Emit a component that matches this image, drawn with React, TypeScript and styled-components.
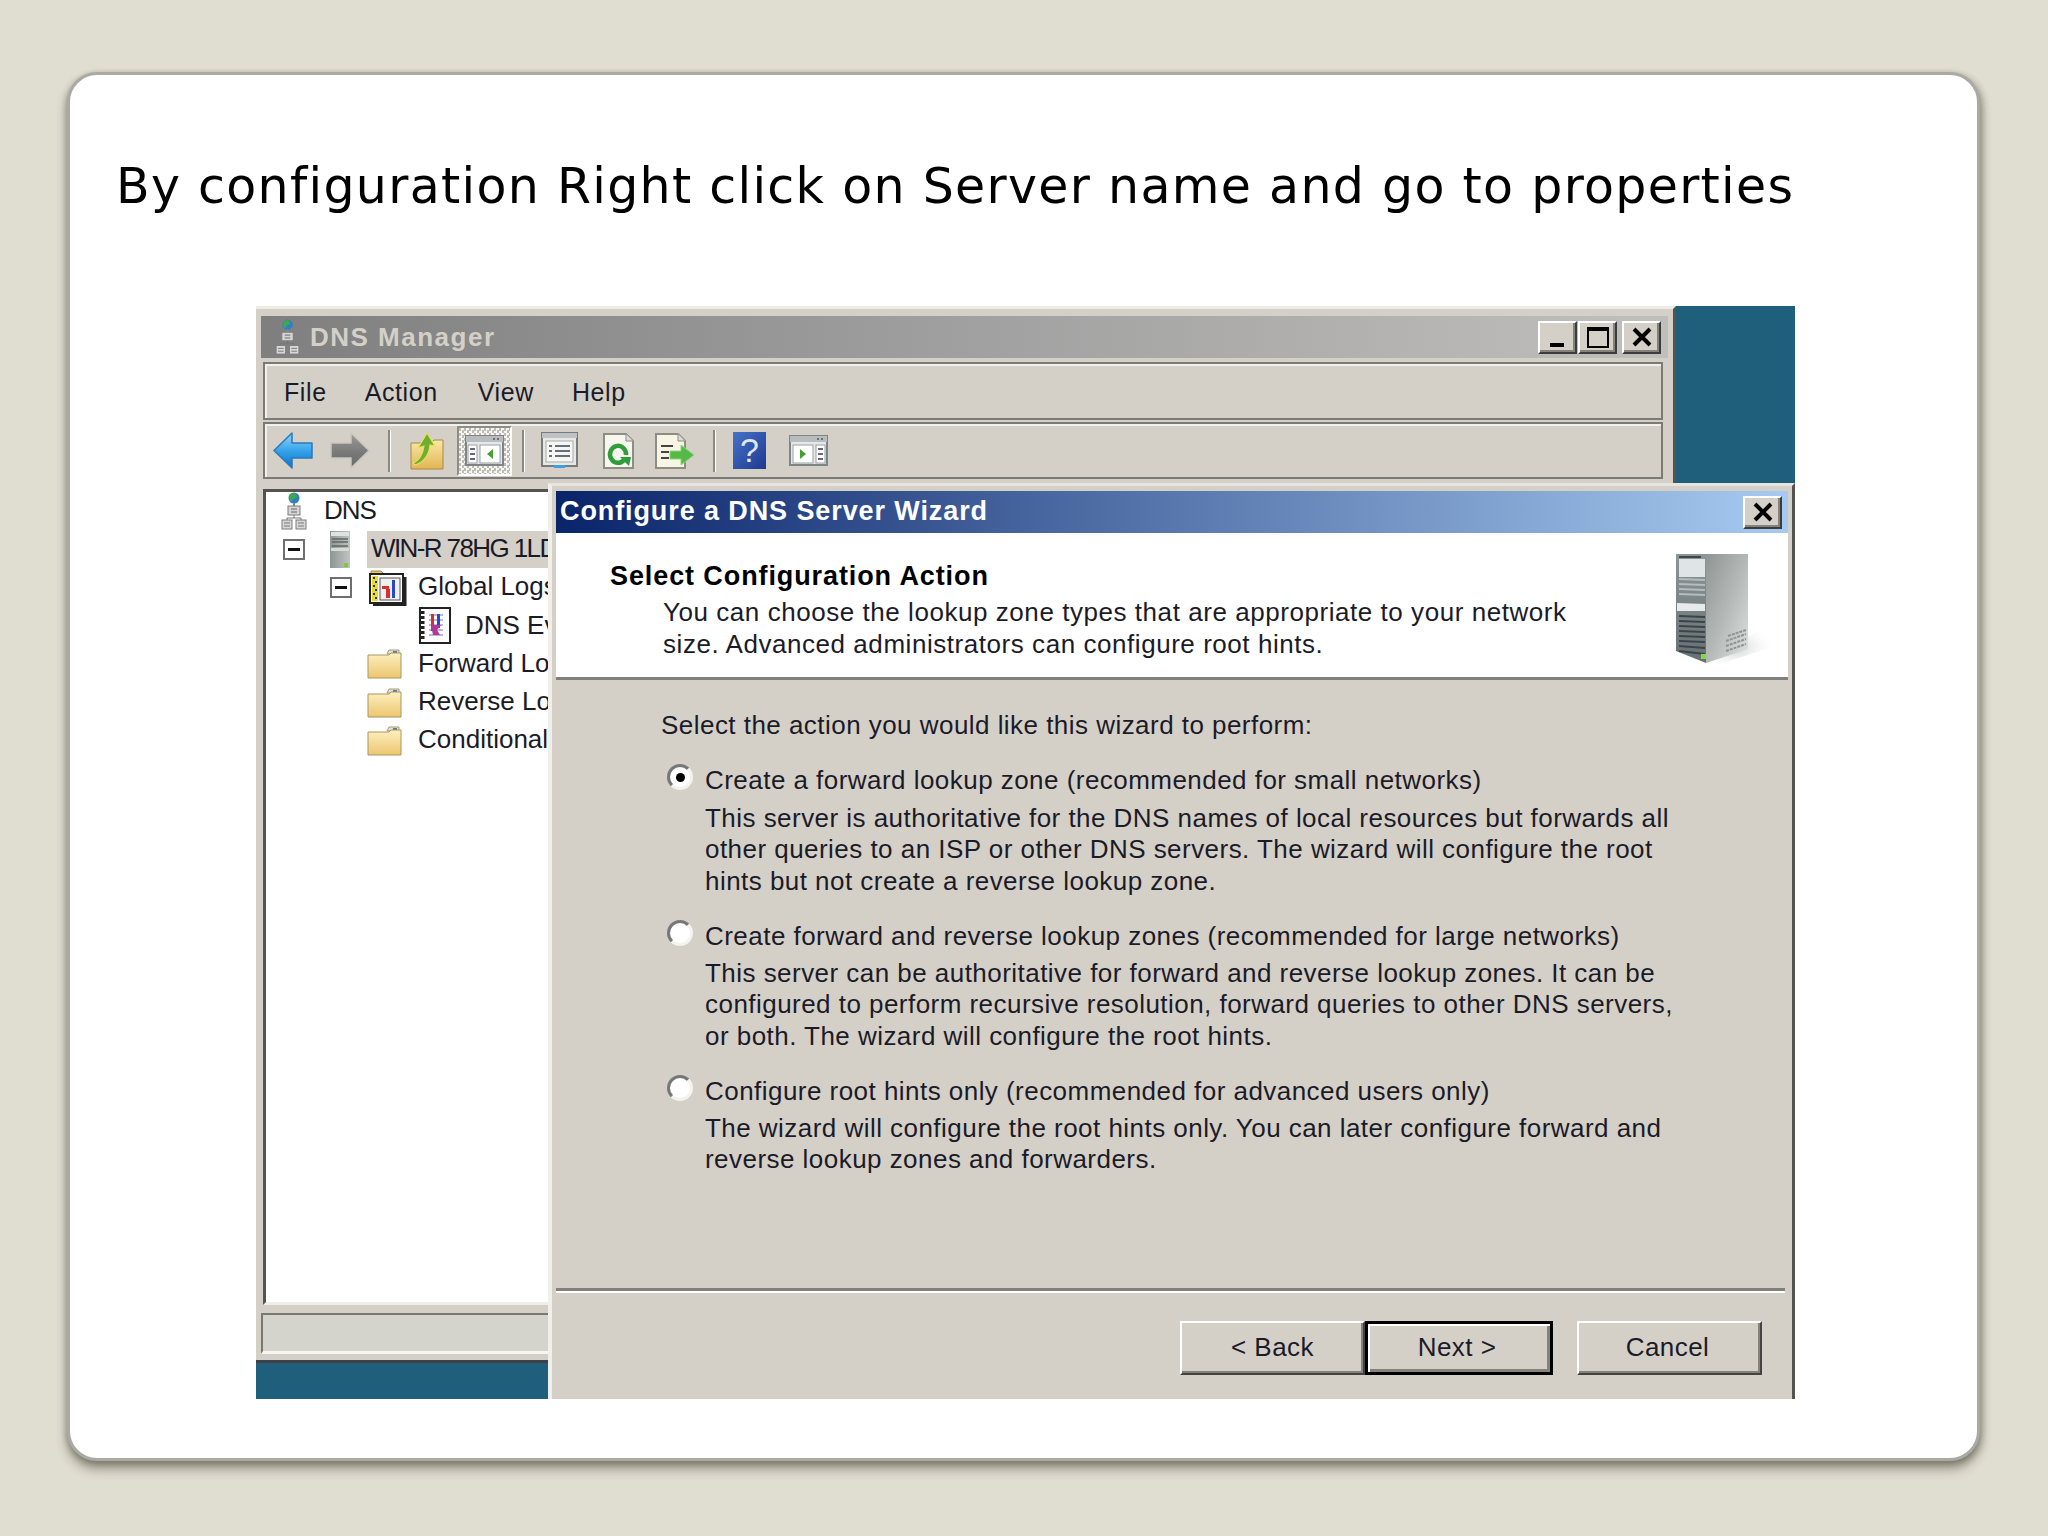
import React from 'react';
import styled, { createGlobalStyle } from 'styled-components';

const GlobalStyle = createGlobalStyle`
  html, body {
    margin: 0;
    padding: 0;
    background: #e0ddd1;
  }
`;

const Page = styled.div`
  box-sizing: border-box;
  width: 2048px;
  height: 1536px;
  padding: 72px 68px 75px 67px;
  background: #e0ddd1;
`;

const Card = styled.div`
  box-sizing: border-box;
  height: 100%;
  padding: 83px 46px 0;
  background: #fff;
  border: 3px solid #aaa9a2;
  border-radius: 30px;
  box-shadow: 0 8px 11px rgba(60, 58, 45, 0.45), -2px 2px 5px rgba(60, 58, 45, 0.15), 3px 2px 6px rgba(60, 58, 45, 0.25);
`;

const SlideTitle = styled.h1`
  margin: 0 0 90px;
  font: 400 49px/58px 'DejaVu Sans', sans-serif;
  letter-spacing: 1.3px;
  color: #000;
  white-space: nowrap;
`;

const Desktop = styled.div`
  position: relative;
  width: 1539px;
  height: 1093px;
  margin-left: 140px;
  background: #1f5f7b;
`;

const MainWindow = styled.div`
  position: absolute;
  left: 0;
  top: 0;
  box-sizing: border-box;
  width: 1420px;
  height: 1057px;
  padding: 7px 5px 0 5px;
  display: flex;
  flex-direction: column;
  background: #d4d0c8;
  border-top: 3px solid #eeece6;
  border-right: 3px solid #55534f;
  border-bottom: 3px solid #3e4248;
  font: 400 26px/31px 'Liberation Sans', sans-serif;
  color: #1b1b28;
`;

const TitleBar = styled.div`
  height: 42px;
  flex: none;
  display: flex;
  align-items: center;
  padding: 0 7px 0 14px;
  background: linear-gradient(90deg, #7f7f7f 0%, #a0a0a0 50%, #c1bfbd 100%);
`;

const WindowName = styled.span`
  margin-left: 10px;
  font-weight: 700;
  font-size: 26px;
  letter-spacing: 1.5px;
  color: #d4d0c8;
  flex: 1;
`;

const Caption = styled.button<{ $gap?: number }>`
  box-sizing: border-box;
  width: 39px;
  height: 33px;
  margin: 0 0 0 ${p => p.$gap ?? 0}px;
  padding: 0;
  display: flex;
  align-items: center;
  justify-content: center;
  background: #d4d0c8;
  border: 2px solid;
  border-color: #fff #3c3c3c #3c3c3c #fff;
  box-shadow: inset -2px -2px 0 #85827c;
`;

const Bar = styled.div<{ $height: number; $top?: number }>`
  box-sizing: border-box;
  flex: none;
  height: ${p => p.$height}px;
  margin: ${p => p.$top ?? 0}px 5px 2px 2px;
  display: flex;
  align-items: center;
  border: 2px solid #7c7a74;
  box-shadow: inset 2px 2px 0 #f2f0ea;
  background: #d4d0c8;
`;

const MenuItem = styled.span<{ $left: number }>`
  margin-left: ${p => p.$left}px;
  padding-top: 2px;
  font-size: 25px;
  letter-spacing: 0.6px;
`;

const ToolSlot = styled.span<{ $left: number }>`
  margin-left: ${p => p.$left}px;
  display: flex;
  flex: none;
`;

const ToolSep = styled.span<{ $left: number }>`
  box-sizing: border-box;
  width: 3px;
  height: 42px;
  flex: none;
  margin-left: ${p => p.$left}px;
  border-left: 2px solid #8a8880;
  border-right: 1px solid #fff;
`;

const ToggledTool = styled.span<{ $left: number }>`
  box-sizing: border-box;
  width: 55px;
  height: 50px;
  flex: none;
  margin-left: ${p => p.$left}px;
  display: flex;
  align-items: center;
  justify-content: center;
  border: 2px solid #8f8d86;
  border-right-color: #fff;
  border-bottom-color: #fff;
  background: repeating-conic-gradient(#f6f5f1 0 25%, #bdbbb4 0 50%) 0 0 / 5px 5px;
`;

const TreePanel = styled.div`
  box-sizing: border-box;
  flex: none;
  height: 816px;
  margin: 8px 5px 0 2px;
  background: #fff;
  border: solid;
  border-width: 3px 0 3px 3px;
  border-color: #55534f #fff #f0eee8 #55534f;
`;

const TreeRow = styled.div<{ $pad: number }>`
  display: flex;
  align-items: center;
  height: 38.3px;
  padding-left: ${p => p.$pad}px;
  white-space: nowrap;
`;

const Toggle = styled.span<{ $after: number }>`
  box-sizing: border-box;
  width: 22px;
  height: 21px;
  flex: none;
  margin-right: ${p => p.$after}px;
  display: flex;
  align-items: center;
  justify-content: center;
  background: #fff;
  border: 2px solid #6f6f6f;

  &::before {
    content: '';
    width: 12px;
    height: 3px;
    background: #111;
  }
`;

const TreeIcon = styled.span`
  display: flex;
  flex: none;
`;

const TreeLabel = styled.span<{ $before: number; $selected?: boolean; $tight?: boolean }>`
  margin-left: ${p => p.$before}px;
  padding: ${p => (p.$selected ? '0 4px 2px' : '0 0 2px')};
  font-size: 26px;
  letter-spacing: ${p => (p.$selected ? '-1.6px' : p.$tight ? '-1px' : '0')};
  line-height: ${p => (p.$selected ? '35px' : '31px')};
  background: ${p => (p.$selected ? '#d4d0c8' : 'transparent')};
  flex: ${p => (p.$selected ? '1' : 'none')};
`;

const StatusBar = styled.div`
  box-sizing: border-box;
  flex: none;
  height: 41px;
  margin: 8px 5px 0 0;
  background: #d4d3cc;
  border: solid;
  border-width: 2px 0 3px 2px;
  border-color: #7a7872 #fff #f6f5f0 #7a7872;
`;

const Dialog = styled.div`
  position: absolute;
  left: 292px;
  top: 177px;
  z-index: 1;
  box-sizing: border-box;
  width: 1247px;
  height: 916px;
  padding: 5px 4px 0 4px;
  display: flex;
  flex-direction: column;
  background: #d4d0c8;
  border-top: 3px solid #e6e4de;
  border-left: 4px solid #f0efea;
  border-right: 3px solid #55534f;
  font: 400 26px/31.4px 'Liberation Sans', sans-serif;
  letter-spacing: 0.46px;
  color: #1b1b28;
`;

const DialogBar = styled.div`
  height: 42px;
  flex: none;
  display: flex;
  align-items: center;
  justify-content: space-between;
  padding: 0 6px 0 4px;
  background: linear-gradient(90deg, #0a246a 0%, #a6caf0 100%);
`;

const DialogName = styled.span`
  font-weight: 700;
  font-size: 27px;
  color: #fff;
  letter-spacing: 0.9px;
`;

const WizardHeader = styled.div`
  box-sizing: border-box;
  height: 147px;
  flex: none;
  display: flex;
  justify-content: space-between;
  padding: 18px 12px 0 54px;
  background: #fff;
  border-bottom: 3px solid #82807a;
`;

const HeaderText = styled.div`
  padding-top: 10px;
`;

const HeaderTitle = styled.div`
  font-weight: 700;
  font-size: 27px;
  color: #000;
  letter-spacing: 0.9px;
`;

const HeaderLines = styled.div`
  margin: 5px 0 0 53px;
  letter-spacing: 0.55px;
`;

const Line = styled.div`
  white-space: nowrap;
`;

const WizardBody = styled.div`
  flex: 1;
  display: flex;
  flex-direction: column;
  padding: 30px 0 0 105px;
`;

const Prompt = styled.div`
  margin-bottom: 24px;
`;

const Options = styled.div`
  display: flex;
  flex-direction: column;
  gap: 23.5px;
`;

const Option = styled.div`
  display: grid;
  grid-template-columns: 44px 1fr;
`;

const Radio = styled.span<{ $checked?: boolean }>`
  box-sizing: border-box;
  width: 26px;
  height: 26px;
  margin: -1px 0 0 6px;
  display: flex;
  align-items: center;
  justify-content: center;
  background: #fff;
  border: 3px solid;
  border-color: #777 #f4f3ee #f4f3ee #777;
  border-radius: 50%;

  &::before {
    content: '';
    width: 9px;
    height: 9px;
    border-radius: 50%;
    background: ${p => (p.$checked ? '#000' : 'transparent')};
  }
`;

const OptionText = styled.div`
  grid-column: 2;
  margin-top: 6px;
`;

const WizardFooter = styled.div`
  margin: auto 0 0 -105px;
  padding: 0 26px 24px 0;
  display: flex;
  flex-direction: column;
`;

const FooterRule = styled.div`
  height: 3px;
  margin-right: -23px;
  margin-bottom: 28px;
  background: #82807a;
  border-bottom: 2px solid #fff;
`;

const FooterButtons = styled.div`
  display: flex;
  justify-content: flex-end;
`;

const PushButton = styled.button<{ $default?: boolean; $gap?: number; $nudge?: number }>`
  box-sizing: border-box;
  width: ${p => (p.$default ? 188 : 185)}px;
  height: 54px;
  margin: 0 0 0 ${p => p.$gap ?? 0}px;
  padding: 0 ${p => p.$nudge ?? 0}px 0 0;
  font: inherit;
  letter-spacing: inherit;
  color: inherit;
  background: #d4d0c8;
  border: ${p => (p.$default ? '3px solid #000' : '2px solid')};
  border-color: ${p => (p.$default ? '#000' : '#fff #45433f #45433f #fff')};
  box-shadow: ${p =>
    p.$default ? 'inset 2px 2px 0 #fff, inset -3px -3px 0 #85827c' : 'inset -2px -2px 0 #85827c'};
`;

const NetworkIcon = ({ width, height }: { width: number; height: number }) => (
  <svg width={width} height={height} viewBox="0 0 26 38">
    <circle cx="13" cy="6" r="5.5" fill="#2f7fc8" />
    <path d="M9 2l5-1 2 4-4 2-1 3-3-3z" fill="#3fa84a" />
    <rect x="12" y="11" width="2" height="3" fill="#8a8a8a" />
    <rect x="7" y="14" width="12" height="9" fill="#d6d6d6" stroke="#7d7d7d" />
    <path d="M10 17h6M10 20h6" stroke="#666" />
    <path d="M13 23v3M6 26h14M6 26v2M20 26v2" stroke="#777" fill="none" />
    <rect x="1" y="28" width="10" height="9" fill="#d8d8d8" stroke="#7d7d7d" />
    <rect x="15" y="28" width="10" height="9" fill="#d8d8d8" stroke="#7d7d7d" />
    <path d="M3 31h6M3 34h6M17 31h6M17 34h6" stroke="#777" />
  </svg>
);

const ServerIcon = () => (
  <svg width="20" height="37" viewBox="0 0 20 37">
    <defs>
      <linearGradient id="srv" x1="0" x2="1" y1="0" y2="0">
        <stop offset="0" stopColor="#8e9693" />
        <stop offset="1" stopColor="#bfc4c1" />
      </linearGradient>
    </defs>
    <rect width="20" height="37" fill="url(#srv)" />
    <rect x="1" y="1" width="18" height="4" fill="#dfe2e0" />
    <path d="M2 8h16M2 11h16M2 15h16" stroke="#5f6866" strokeWidth="1.4" />
    <rect x="1" y="17" width="18" height="3" fill="#d6dad7" />
    <rect x="14" y="32" width="4" height="4" fill="#7fc83c" />
  </svg>
);

const LogsIcon = () => (
  <svg width="39" height="36" viewBox="0 0 39 36">
    <path d="M3 1h10l3 3H3z" fill="#e8c860" stroke="#9a8a50" />
    <rect x="2" y="4" width="33" height="29" fill="#fff" stroke="#222" strokeWidth="2" />
    <path d="M37 7v28H5" fill="none" stroke="#222" strokeWidth="3" />
    <rect x="4" y="6" width="6" height="25" fill="#e8dc30" />
    <path d="M5 8h2M7 12h2M5 16h2M7 20h2M5 24h2M7 28h2" stroke="#333" strokeWidth="2" />
    <rect x="12" y="8" width="20" height="22" fill="#f0f0ec" stroke="#555" />
    <rect x="14" y="16" width="7" height="3" fill="#d83030" />
    <rect x="18" y="19" width="4" height="9" fill="#d83030" />
    <rect x="24" y="10" width="3" height="18" fill="#2848c8" />
  </svg>
);

const EventIcon = () => (
  <svg width="34" height="38" viewBox="0 0 34 38">
    <rect x="2" y="1" width="30" height="35" fill="#fff" stroke="#222" strokeWidth="2" />
    <path d="M4 4v30" stroke="#222" strokeWidth="5" strokeDasharray="3 2" />
    <path d="M11 8h14M11 13h14M11 18h14M11 23h14M11 28h14" stroke="#b8b8d8" strokeWidth="2" />
    <rect x="13" y="7" width="3" height="17" fill="#d83030" />
    <rect x="19" y="7" width="3" height="14" fill="#2848c8" />
    <path d="M13 18h10l-4 5 3 5h-7" fill="#b03898" />
  </svg>
);

const FolderIcon = () => (
  <svg width="35" height="30" viewBox="0 0 35 30">
    <defs>
      <linearGradient id="folder" x1="0" x2="0" y1="0" y2="1">
        <stop offset="0" stopColor="#fdf0c0" />
        <stop offset="1" stopColor="#ecc66e" />
      </linearGradient>
    </defs>
    <path d="M22 1h10v4H20z" fill="#e6e2d2" stroke="#a89a70" />
    <rect x="26" y="2" width="4" height="2" fill="#5878b0" />
    <path d="M1 6h21l2-2h10v25H1z" fill="url(#folder)" stroke="#a99660" />
  </svg>
);

const BackArrow = () => (
  <svg width="40" height="37" viewBox="0 0 40 37">
    <defs>
      <linearGradient id="blueArrow" x1="0" x2="0" y1="0" y2="1">
        <stop offset="0" stopColor="#8fd6fb" />
        <stop offset="0.55" stopColor="#2f9fe8" />
        <stop offset="1" stopColor="#1b6fc0" />
      </linearGradient>
    </defs>
    <path d="M1 18.5L19 1v10h20v15H19v10z" fill="url(#blueArrow)" stroke="#2a78bd" strokeWidth="1.5" strokeLinejoin="round" />
  </svg>
);

const ForwardArrow = () => (
  <svg width="40" height="37" viewBox="0 0 40 37">
    <defs>
      <linearGradient id="greyArrow" x1="0" x2="0" y1="0" y2="1">
        <stop offset="0" stopColor="#9a9a98" />
        <stop offset="0.6" stopColor="#777" />
        <stop offset="1" stopColor="#6a6a68" />
      </linearGradient>
    </defs>
    <path d="M39 18.5L21 1v10H1v15h20v10z" fill="url(#greyArrow)" stroke="#c8c6c0" strokeWidth="1.5" strokeLinejoin="round" />
  </svg>
);

const UpFolder = () => (
  <svg width="34" height="38" viewBox="0 0 34 38">
    <defs>
      <linearGradient id="upF" x1="0" x2="0" y1="0" y2="1">
        <stop offset="0" stopColor="#fbe7a6" />
        <stop offset="1" stopColor="#e2b654" />
      </linearGradient>
    </defs>
    <path d="M1 11h20l3-3h9v29H1z" fill="url(#upF)" stroke="#a48a48" />
    <path d="M3 31c6-2 10-9 11-17l-6 2L17 1l8 13-5-1c-1 10-6 17-15 20z" fill="#6fae2e" stroke="#e8e060" strokeWidth="1.2" />
  </svg>
);

const PaneIcon = ({ flip }: { flip?: boolean }) => (
  <svg width="39" height="31" viewBox="0 0 39 31">
    <rect x="1" y="1" width="37" height="29" fill="#e6e8e8" stroke="#7e8488" strokeWidth="2" />
    <rect x="1" y="1" width="37" height="6" fill="#b8bcbe" />
    <path d="M28 4h2M32 4h2" stroke="#555" strokeWidth="1.5" />
    {flip ? (
      <>
        <rect x="4" y="10" width="20" height="18" fill="#fff" stroke="#98a0a4" />
        <path d="M11 14l6 5-6 5z" fill="#44a030" />
        <rect x="27" y="10" width="9" height="18" fill="#fff" stroke="#98a0a4" />
        <path d="M29 14h5M29 19h5M29 24h5" stroke="#667" strokeWidth="2" />
      </>
    ) : (
      <>
        <rect x="3" y="10" width="9" height="18" fill="#fff" stroke="#98a0a4" />
        <path d="M5 14h5M5 19h5M5 24h5" stroke="#667" strokeWidth="2" />
        <rect x="15" y="10" width="20" height="18" fill="#fff" stroke="#98a0a4" />
        <path d="M28 14l-6 5 6 5z" fill="#44a030" />
      </>
    )}
  </svg>
);

const ListIcon = () => (
  <svg width="37" height="37" viewBox="0 0 37 37">
    <rect x="1" y="1" width="35" height="33" fill="#e8e9e6" stroke="#777b7e" strokeWidth="2" />
    <rect x="1" y="1" width="35" height="5" fill="#bfc2c3" />
    <rect x="5" y="9" width="27" height="21" fill="#f6f6f4" stroke="#a8acae" />
    <path d="M8 14h3M14 14h15M8 19h3M14 19h15M8 24h3M14 24h15" stroke="#66707a" strokeWidth="2" />
    <rect x="13" y="33" width="11" height="3" fill="#3fa0e0" />
  </svg>
);

const RefreshIcon = () => (
  <svg width="31" height="36" viewBox="0 0 31 36">
    <path d="M1 1h22l7 7v27H1z" fill="#f7f7f0" stroke="#8d8d86" strokeWidth="2" />
    <path d="M23 1v7h7" fill="#dcdcd4" stroke="#8d8d86" />
    <path d="M21 27a8 8.5 0 1 1 2-5" fill="none" stroke="#2f9e3a" strokeWidth="4.5" />
    <path d="M17 24h11l-2 9z" fill="#2f9e3a" />
  </svg>
);

const ExportIcon = () => (
  <svg width="40" height="36" viewBox="0 0 40 36">
    <path d="M1 1h22l7 7v27H1z" fill="#f7f6e4" stroke="#8d8d86" strokeWidth="2" />
    <path d="M23 1v7h7" fill="#dcdcd4" stroke="#8d8d86" />
    <path d="M6 13h12M6 19h8M6 25h8" stroke="#444" strokeWidth="2" />
    <path d="M15 18h11v-6l13 10-13 10v-6H15z" fill="#55b848" stroke="#8cd878" />
  </svg>
);

const HelpIcon = () => (
  <svg width="33" height="37" viewBox="0 0 33 37">
    <defs>
      <linearGradient id="helpBg" x1="0" x2="1" y1="0" y2="1">
        <stop offset="0" stopColor="#4672c8" />
        <stop offset="1" stopColor="#1d3a8e" />
      </linearGradient>
    </defs>
    <rect width="33" height="37" fill="url(#helpBg)" />
    <text x="16.5" y="30" textAnchor="middle" fontFamily="Liberation Sans, sans-serif" fontSize="34" fill="#dfe6f6">?</text>
  </svg>
);

const TowerIcon = () => (
  <svg width="100" height="115" viewBox="0 0 100 115">
    <defs>
      <linearGradient id="towerSide" x1="0" x2="1" y1="0" y2="1">
        <stop offset="0" stopColor="#8f9593" />
        <stop offset="0.5" stopColor="#b4b9b7" />
        <stop offset="1" stopColor="#dfe3e1" />
      </linearGradient>
      <linearGradient id="towerFront" x1="0" x2="0" y1="0" y2="1">
        <stop offset="0" stopColor="#8d9799" />
        <stop offset="1" stopColor="#667074" />
      </linearGradient>
      <radialGradient id="towerShadow" cx="0.4" cy="0.6" r="0.6">
        <stop offset="0" stopColor="#b8bcba" stopOpacity="0.7" />
        <stop offset="1" stopColor="#fff" stopOpacity="0" />
      </radialGradient>
    </defs>
    <path d="M32 110L98 70 100 95 40 114z" fill="url(#towerShadow)" />
    <path d="M0 3h30v109L0 100z" fill="url(#towerFront)" />
    <path d="M30 3h42v95l-42 14z" fill="url(#towerSide)" />
    <path d="M3 8h26v18H3z" fill="#dfe5e5" />
    <path d="M3 6h22" stroke="#444" strokeWidth="2" />
    <path d="M3 28l26 1M3 33l26 1M3 38l26 1M3 43l26 1" stroke="#b5bcbc" strokeWidth="2" />
    <path d="M1 52l28 1v7H1z" fill="#e6eaea" />
    <path d="M3 65l26 1M3 70l26 1M3 75l26 1M3 80l26 1M3 85l26 1M3 90l26 1M3 95l26 2M3 100l26 3" stroke="#3c4448" strokeWidth="2" />
    <rect x="25" y="103" width="5" height="5" fill="#7fdc3c" />
    <path d="M50 100l20-7M50 95l20-7M50 90l20-7M52 85l18-6" stroke="#8d9492" strokeWidth="2" strokeDasharray="3 1" />
  </svg>
);

const MinGlyph = () => (
  <svg width="24" height="24" viewBox="0 0 24 24">
    <rect x="4" y="18" width="14" height="4" fill="#000" />
  </svg>
);

const MaxGlyph = () => (
  <svg width="24" height="24" viewBox="0 0 24 24">
    <path d="M2 3h20v19H2z" fill="none" stroke="#000" strokeWidth="2" />
    <rect x="2" y="2" width="20" height="4" fill="#000" />
  </svg>
);

const CloseGlyph = () => (
  <svg width="22" height="20" viewBox="0 0 22 20">
    <path d="M3 2l16 16M19 2L3 18" stroke="#000" strokeWidth="4" />
  </svg>
);

const options = [
  {
    label: 'Create a forward lookup zone (recommended for small networks)',
    checked: true,
    lines: [
      'This server is authoritative for the DNS names of local resources but forwards all',
      'other queries to an ISP or other DNS servers. The wizard will configure the root',
      'hints but not create a reverse lookup zone.',
    ],
  },
  {
    label: 'Create forward and reverse lookup zones (recommended for large networks)',
    checked: false,
    lines: [
      'This server can be authoritative for forward and reverse lookup zones. It can be',
      'configured to perform recursive resolution, forward queries to other DNS servers,',
      'or both. The wizard will configure the root hints.',
    ],
  },
  {
    label: 'Configure root hints only (recommended for advanced users only)',
    checked: false,
    lines: [
      'The wizard will configure the root hints only. You can later configure forward and',
      'reverse lookup zones and forwarders.',
    ],
  },
];

const App: React.FC = () => (
  <>
    <GlobalStyle />
    <Page>
      <Card>
        <SlideTitle>By configuration Right click on Server name and go to properties</SlideTitle>
        <Desktop>
          <MainWindow>
            <TitleBar>
              <NetworkIcon width={25} height={36} />
              <WindowName>DNS Manager</WindowName>
              <Caption><MinGlyph /></Caption>
              <Caption $gap={1}><MaxGlyph /></Caption>
              <Caption $gap={5}><CloseGlyph /></Caption>
            </TitleBar>
            <Bar $height={58} $top={4}>
              <MenuItem $left={19}>File</MenuItem>
              <MenuItem $left={38}>Action</MenuItem>
              <MenuItem $left={40}>View</MenuItem>
              <MenuItem $left={38}>Help</MenuItem>
            </Bar>
            <Bar $height={57}>
              <ToolSlot $left={8}><BackArrow /></ToolSlot>
              <ToolSlot $left={17}><ForwardArrow /></ToolSlot>
              <ToolSep $left={18} />
              <ToolSlot $left={19}><UpFolder /></ToolSlot>
              <ToggledTool $left={13}><PaneIcon /></ToggledTool>
              <ToolSep $left={10} />
              <ToolSlot $left={16}><ListIcon /></ToolSlot>
              <ToolSlot $left={25}><RefreshIcon /></ToolSlot>
              <ToolSlot $left={21}><ExportIcon /></ToolSlot>
              <ToolSep $left={18} />
              <ToolSlot $left={17}><HelpIcon /></ToolSlot>
              <ToolSlot $left={23}><PaneIcon flip /></ToolSlot>
            </Bar>
            <TreePanel>
              <TreeRow $pad={15}>
                <TreeIcon><NetworkIcon width={26} height={38} /></TreeIcon>
                <TreeLabel $before={17} $tight>DNS</TreeLabel>
              </TreeRow>
              <TreeRow $pad={17}>
                <Toggle $after={25} />
                <TreeIcon><ServerIcon /></TreeIcon>
                <TreeLabel $before={17} $selected>WIN-R 78HG 1LD</TreeLabel>
              </TreeRow>
              <TreeRow $pad={64}>
                <Toggle $after={16} />
                <TreeIcon><LogsIcon /></TreeIcon>
                <TreeLabel $before={11}>Global Logs</TreeLabel>
              </TreeRow>
              <TreeRow $pad={152}>
                <TreeIcon><EventIcon /></TreeIcon>
                <TreeLabel $before={13}>DNS Event Logs</TreeLabel>
              </TreeRow>
              <TreeRow $pad={101}>
                <TreeIcon><FolderIcon /></TreeIcon>
                <TreeLabel $before={16}>Forward Lookup Zones</TreeLabel>
              </TreeRow>
              <TreeRow $pad={101}>
                <TreeIcon><FolderIcon /></TreeIcon>
                <TreeLabel $before={16}>Reverse Lookup Zones</TreeLabel>
              </TreeRow>
              <TreeRow $pad={101}>
                <TreeIcon><FolderIcon /></TreeIcon>
                <TreeLabel $before={16}>Conditional Forwarders</TreeLabel>
              </TreeRow>
            </TreePanel>
            <StatusBar />
          </MainWindow>
          <Dialog>
            <DialogBar>
              <DialogName>Configure a DNS Server Wizard</DialogName>
              <Caption><CloseGlyph /></Caption>
            </DialogBar>
            <WizardHeader>
              <HeaderText>
                <HeaderTitle>Select Configuration Action</HeaderTitle>
                <HeaderLines>
                  <Line>You can choose the lookup zone types that are appropriate to your network</Line>
                  <Line>size. Advanced administrators can configure root hints.</Line>
                </HeaderLines>
              </HeaderText>
              <TowerIcon />
            </WizardHeader>
            <WizardBody>
              <Prompt>Select the action you would like this wizard to perform:</Prompt>
              <Options>
                {options.map(option => (
                  <Option key={option.label}>
                    <Radio $checked={option.checked} />
                    <Line>{option.label}</Line>
                    <OptionText>
                      {option.lines.map(line => (
                        <Line key={line}>{line}</Line>
                      ))}
                    </OptionText>
                  </Option>
                ))}
              </Options>
              <WizardFooter>
                <FooterRule />
                <FooterButtons>
                  <PushButton>&lt; Back</PushButton>
                  <PushButton $default $nudge={4}>Next &gt;</PushButton>
                  <PushButton $gap={24} $nudge={4}>Cancel</PushButton>
                </FooterButtons>
              </WizardFooter>
            </WizardBody>
          </Dialog>
        </Desktop>
      </Card>
    </Page>
  </>
);

export default App;
